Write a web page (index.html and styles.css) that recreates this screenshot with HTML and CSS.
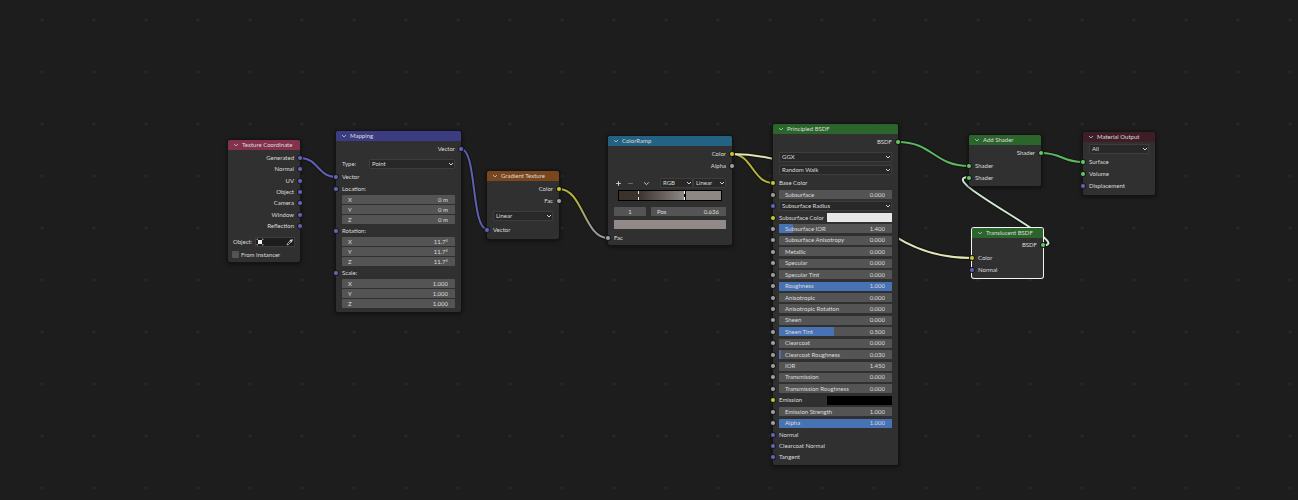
FILE: index.html
```html
<!DOCTYPE html>
<html lang="en">

<head>
    <meta charset="UTF-8">
    <meta name="viewport" content="width=device-width, initial-scale=1.0">
    <title>Shader Editor</title>
    <link rel="stylesheet" href="styles.css">
</head>

<body>
    <main class="canvas">
        <!-- Links between sockets -->
        <svg class="links" aria-hidden="true">
            <defs>
                <linearGradient id="color-to-fac" x1="0" y1="0" x2="1" y2="1">
                    <stop offset="0.3" stop-color="#b5b53a" />
                    <stop offset="0.7" stop-color="#9a9a9a" />
                </linearGradient>
            </defs>
            <g class="link-shadow">
                <path d="M300 158C318 158 318 177 336 177" />
                <path d="M461 149C477 149 471 229 487 229" />
                <path d="M559 189C583 189 584 238 608 238" />
                <path d="M732 154C752 154 753 183 773 183" />
                <path d="M732 154C850 154 862 258 971 258" />
                <path d="M898 142C933 142 934 166 969 166" />
                <path d="M1041 153C1062 153 1062 162 1083 162" />
                <path d="M1044 245C1075 245 932 177 969 177" />
            </g>
            <g class="link">
                <path class="vector" d="M300 158C318 158 318 177 336 177" />
                <path class="vector" d="M461 149C477 149 471 229 487 229" />
                <path stroke="url(#color-to-fac)" d="M559 189C583 189 584 238 608 238" />
                <path class="color" d="M732 154C752 154 753 183 773 183" />
                <path class="color-active" d="M732 154C850 154 862 258 971 258" />
                <path class="shader" d="M898 142C933 142 934 166 969 166" />
                <path class="shader" d="M1041 153C1062 153 1062 162 1083 162" />
                <path class="shader-active" d="M1044 245C1075 245 932 177 969 177" />
            </g>
        </svg>

        <section class="node tex-coord">
            <h2 class="red"><svg class="chevron" viewBox="0 0 6 4"><path d="M1 1l2 2 2-2" /></svg>Texture Coordinate</h2>
            <div class="rows outputs">
                <div class="row out vec">Generated</div>
                <div class="row out vec">Normal</div>
                <div class="row out vec">UV</div>
                <div class="row out vec">Object</div>
                <div class="row out vec">Camera</div>
                <div class="row out vec">Window</div>
                <div class="row out vec">Reflection</div>
            </div>
            <div class="object-row">
                <span>Object:</span>
                <button class="picker" aria-label="Pick object">
                    <svg class="cube" viewBox="0 0 8 8"><path d="M1 2V1h1M6 1h1v1M7 6v1H6M2 7H1V6" /><rect x="2" y="2" width="4" height="4" /></svg>
                    <svg class="dropper" viewBox="0 0 8 8"><path d="M1 7l.5-1.5L4.500 2.500l1 1L2.500 6.500z" /><path class="bulb" d="M4 2l2 2M5 3l1.500-1.500" /></svg>
                </button>
            </div>
            <label class="check"><input type="checkbox">From Instancer</label>
        </section>

        <section class="node mapping">
            <h2 class="blue"><svg class="chevron" viewBox="0 0 6 4"><path d="M1 1l2 2 2-2" /></svg>Mapping</h2>
            <div class="row out vec">Vector</div>
            <div class="type-row">
                <label for="map-type">Type:</label>
                <select id="map-type"><option>Point</option></select>
            </div>
            <div class="row in vec">Vector</div>
            <div class="row in vec">Location:</div>
            <div class="xyz">
                <label class="field">X<input type="text" value="0 m"></label>
                <label class="field">Y<input type="text" value="0 m"></label>
                <label class="field">Z<input type="text" value="0 m"></label>
            </div>
            <div class="row in vec">Rotation:</div>
            <div class="xyz">
                <label class="field">X<input type="text" value="11.7°"></label>
                <label class="field">Y<input type="text" value="11.7°"></label>
                <label class="field">Z<input type="text" value="11.7°"></label>
            </div>
            <div class="row in vec">Scale:</div>
            <div class="xyz">
                <label class="field">X<input type="text" value="1.000"></label>
                <label class="field">Y<input type="text" value="1.000"></label>
                <label class="field">Z<input type="text" value="1.000"></label>
            </div>
        </section>

        <section class="node gradient-tex">
            <h2 class="orange"><svg class="chevron" viewBox="0 0 6 4"><path d="M1 1l2 2 2-2" /></svg>Gradient Texture</h2>
            <div class="row out col">Color</div>
            <div class="row out val">Fac</div>
            <div class="select-row"><select aria-label="Gradient type"><option>Linear</option></select></div>
            <div class="row in vec">Vector</div>
        </section>

        <section class="node color-ramp">
            <h2 class="teal"><svg class="chevron" viewBox="0 0 6 4"><path d="M1 1l2 2 2-2" /></svg>ColorRamp</h2>
            <div class="row out col">Color</div>
            <div class="row out val">Alpha</div>
            <div class="ramp-tools">
                <button aria-label="Add stop"><svg viewBox="0 0 6 6"><path d="M3 1v4M1 3h4" /></svg></button>
                <button class="dim" aria-label="Remove stop"><svg viewBox="0 0 6 6"><path d="M1 3h4" /></svg></button>
                <button aria-label="Ramp tools"><svg viewBox="0 0 6 6"><path d="M1 2l2 2 2-2" /></svg></button>
                <select aria-label="Color mode"><option>RGB</option></select>
                <select aria-label="Interpolation"><option>Linear</option></select>
            </div>
            <div class="ramp">
                <i class="stop" style="left: 19%"></i>
                <i class="stop active" style="left: 64%"></i>
            </div>
            <div class="stop-row">
                <input class="index" type="text" value="1" aria-label="Active stop">
                <label class="field">Pos<input type="text" value="0.636"></label>
            </div>
            <input class="swatch" type="color" value="#928a88" aria-label="Stop color">
            <div class="row in val">Fac</div>
        </section>

        <section class="node principled">
            <h2 class="green"><svg class="chevron" viewBox="0 0 6 4"><path d="M1 1l2 2 2-2" /></svg>Principled BSDF</h2>
            <div class="row out shd">BSDF</div>
            <div class="select-row"><select aria-label="Distribution"><option>GGX</option></select></div>
            <div class="select-row"><select aria-label="Subsurface method"><option>Random Walk</option></select></div>
            <div class="row in col base">Base Color</div>
            <div class="rows params">
                <div class="row in val"><label class="field">Subsurface<input type="text" value="0.000"></label></div>
                <div class="row in vec"><select aria-label="Subsurface radius"><option>Subsurface Radius</option></select></div>
                <div class="row in col"><label class="color-field">Subsurface Color<input class="swatch" type="color" value="#e7e7e7"></label></div>
                <div class="row in val"><label class="field"><b class="fill" style="width: 12%"></b>Subsurface IOR<input type="text" value="1.400"></label></div>
                <div class="row in val"><label class="field">Subsurface Anisotropy<input type="text" value="0.000"></label></div>
                <div class="row in val"><label class="field">Metallic<input type="text" value="0.000"></label></div>
                <div class="row in val"><label class="field">Specular<input type="text" value="0.000"></label></div>
                <div class="row in val"><label class="field">Specular Tint<input type="text" value="0.000"></label></div>
                <div class="row in val"><label class="field"><b class="fill" style="width: 100%"></b>Roughness<input type="text" value="1.000"></label></div>
                <div class="row in val"><label class="field">Anisotropic<input type="text" value="0.000"></label></div>
                <div class="row in val"><label class="field">Anisotropic Rotation<input type="text" value="0.000"></label></div>
                <div class="row in val"><label class="field">Sheen<input type="text" value="0.000"></label></div>
                <div class="row in val"><label class="field"><b class="fill" style="width: 49%"></b>Sheen Tint<input type="text" value="0.500"></label></div>
                <div class="row in val"><label class="field">Clearcoat<input type="text" value="0.000"></label></div>
                <div class="row in val"><label class="field"><b class="fill" style="width: 2%"></b>Clearcoat Roughness<input type="text" value="0.030"></label></div>
                <div class="row in val"><label class="field">IOR<input type="text" value="1.450"></label></div>
                <div class="row in val"><label class="field">Transmission<input type="text" value="0.000"></label></div>
                <div class="row in val"><label class="field">Transmission Roughness<input type="text" value="0.000"></label></div>
                <div class="row in col"><label class="color-field">Emission<input class="swatch" type="color" value="#000000"></label></div>
                <div class="row in val"><label class="field">Emission Strength<input type="text" value="1.000"></label></div>
                <div class="row in val"><label class="field"><b class="fill" style="width: 100%"></b>Alpha<input type="text" value="1.000"></label></div>
                <div class="row in vec">Normal</div>
                <div class="row in vec">Clearcoat Normal</div>
                <div class="row in vec">Tangent</div>
            </div>
        </section>

        <section class="node add-shader">
            <h2 class="green"><svg class="chevron" viewBox="0 0 6 4"><path d="M1 1l2 2 2-2" /></svg>Add Shader</h2>
            <div class="row out shd">Shader</div>
            <div class="row in shd">Shader</div>
            <div class="row in shd">Shader</div>
        </section>

        <section class="node translucent selected">
            <h2 class="green"><svg class="chevron" viewBox="0 0 6 4"><path d="M1 1l2 2 2-2" /></svg>Translucent BSDF</h2>
            <div class="row out shd">BSDF</div>
            <div class="row in col">Color</div>
            <div class="row in vec">Normal</div>
        </section>

        <section class="node output">
            <h2 class="maroon"><svg class="chevron" viewBox="0 0 6 4"><path d="M1 1l2 2 2-2" /></svg>Material Output</h2>
            <div class="select-row"><select aria-label="Target"><option>All</option></select></div>
            <div class="row in shd">Surface</div>
            <div class="row in shd">Volume</div>
            <div class="row in vec">Displacement</div>
        </section>
    </main>
</body>

</html>
```
FILE: styles.css
```css
* {
    box-sizing: border-box;
}

body {
    margin: 0;
    background-color: #1d1d1d;
    color: #dcdcdc;
    font-family: Lato, sans-serif;
    font-size: 6px;
    line-height: 10px;
}

input,
select,
button {
    margin: 0;
    padding: 0;
    border: none;
    border-radius: 0;
    background: none;
    color: inherit;
    font: inherit;
    appearance: none;
}

.canvas {
    position: relative;
    min-height: 100vh;
    overflow: hidden;
    background-image: radial-gradient(circle, #282828 1px, transparent 2px);
    background-size: 52px 52px;
    background-position: 16px -6px;
}

.links {
    position: absolute;
    top: 0;
    left: 0;
    width: 100%;
    height: 100%;
    fill: none;
}

.link-shadow {
    stroke: #121212;
    stroke-width: 4;
}

.link {
    stroke-width: 2;
}

.link .vector {
    stroke: #6060b4;
}

.link .color {
    stroke: #b5b53a;
}

.link .color-active {
    stroke: #e6e6b8;
}

.link .shader {
    stroke: #5cb860;
}

.link .shader-active {
    stroke: #cfe6d0;
}

/* Nodes */
.node {
    position: absolute;
    background-color: #303030;
    border-radius: 2px;
    box-shadow: 0 0 0 1px #141414, 0 1px 4px 1px rgba(0, 0, 0, 0.5);
}

.node.selected {
    box-shadow: 0 0 0 1px #f2f2f2;
}

.node h2 {
    display: flex;
    align-items: center;
    gap: 3px;
    height: 10px;
    margin: 0;
    padding-left: 5px;
    border-radius: 2px 2px 0 0;
    font-size: 6px;
    font-weight: normal;
    white-space: nowrap;
}

.chevron {
    width: 6px;
    height: 4px;
    fill: none;
    stroke: #c8c8c8;
    stroke-width: 0.8;
}

.red {
    background-color: #83314c;
}

.blue {
    background-color: #3c3c83;
}

.orange {
    background-color: #79461d;
}

.teal {
    background-color: #246283;
}

.green {
    background-color: #2b652b;
}

.maroon {
    background-color: #3f1d27;
}

.tex-coord {
    left: 228px;
    top: 140px;
    width: 72px;
    padding-bottom: 1px;
}

.mapping {
    left: 336px;
    top: 131px;
    width: 125px;
    padding-bottom: 3px;
}

.gradient-tex {
    left: 487px;
    top: 171px;
    width: 72px;
    padding-bottom: 3px;
}

.color-ramp {
    left: 608px;
    top: 136px;
    width: 124px;
    padding-bottom: 1px;
}

.principled {
    left: 773px;
    top: 124px;
    width: 125px;
    padding-bottom: 2px;
}

.add-shader {
    left: 969px;
    top: 135px;
    width: 72px;
    padding-bottom: 2px;
}

.translucent {
    left: 972px;
    top: 228px;
    width: 71px;
    padding-bottom: 2px;
}

.output {
    left: 1083px;
    top: 132px;
    width: 72px;
    padding-bottom: 3px;
}

/* Socket rows */
.row {
    position: relative;
    display: flex;
    align-items: center;
    height: 12px;
    padding: 0 6px;
    white-space: nowrap;
}

.rows {
    display: flex;
    flex-direction: column;
}

.rows .row {
    flex: 1;
    height: auto;
}

.row.out {
    justify-content: flex-end;
}

.row::before {
    content: "";
    position: absolute;
    top: 50%;
    left: -2px;
    width: 4px;
    height: 4px;
    margin-top: -2px;
    border-radius: 50%;
    box-shadow: 0 0 0 1px #1a1a1a;
}

.row.out::before {
    left: auto;
    right: -2px;
}

.vec::before {
    background-color: #6363c0;
}

.col::before {
    background-color: #c7c729;
}

.val::before {
    background-color: #a1a1a1;
}

.shd::before {
    background-color: #63c763;
}

/* Controls */
select {
    width: 100%;
    height: 10px;
    padding: 0 6px 0 2px;
    border: 1px solid #3d3d3d;
    border-radius: 1px;
    background: #282828 url("data:image/svg+xml,%3Csvg xmlns='http://www.w3.org/2000/svg' viewBox='0 0 6 4'%3E%3Cpath d='M1 1l2 2 2-2' fill='none' stroke='%23d0d0d0'/%3E%3C/svg%3E") no-repeat right 0 center / 6px 4px;
    line-height: 8px;
}

.select-row {
    display: flex;
    align-items: center;
    height: 13px;
    padding: 0 6px;
}

.field {
    position: relative;
    display: flex;
    align-items: center;
    flex: 1;
    height: 9px;
    padding: 0 7px 0 6px;
    background-color: #545454;
    border-radius: 1px;
    isolation: isolate;
}

.field input {
    flex: 1;
    min-width: 0;
    width: 20px;
    height: 9px;
    text-align: right;
}

.fill {
    position: absolute;
    top: 0;
    left: 0;
    bottom: 0;
    z-index: -1;
    background-color: #4772b3;
    border-radius: 1px;
}

.color-field {
    display: flex;
    align-items: center;
    justify-content: space-between;
    flex: 1;
}

.swatch {
    display: block;
    width: 65px;
    height: 9px;
}

.swatch::-webkit-color-swatch-wrapper {
    padding: 0;
}

.swatch::-webkit-color-swatch {
    border: none;
}

/* Texture Coordinate */
.outputs {
    height: 80px;
    margin-top: 2px;
}

.object-row {
    display: flex;
    align-items: center;
    gap: 3px;
    height: 12px;
    margin-top: 4px;
    padding: 0 5px;
}

.picker {
    display: flex;
    align-items: center;
    justify-content: space-between;
    flex: 1;
    height: 10px;
    border: 1px solid #3d3d3d;
    background-color: #1d1d1d;
}

.picker svg {
    width: 8px;
    height: 8px;
    fill: none;
    stroke: #d6d6d6;
    stroke-width: 0.7;
}

.picker .cube rect {
    fill: #f0f0f0;
    stroke: none;
}

.picker .bulb {
    stroke-width: 1.4;
}

.check {
    display: flex;
    align-items: center;
    gap: 2px;
    height: 13px;
    padding-left: 4px;
}

.check input {
    width: 7px;
    height: 7px;
    border-radius: 1px;
    background-color: #545454;
}

/* Mapping */
.mapping .out {
    margin-top: 2px;
}

.type-row {
    display: flex;
    align-items: center;
    height: 16px;
    padding: 2px 6px 0;
}

.type-row label {
    flex: 0 0 27px;
}

.xyz {
    display: flex;
    flex-direction: column;
    gap: 1px;
    padding: 0 6px;
    margin-bottom: 1px;
}

.xyz .field {
    flex: none;
}

/* Gradient Texture */
.gradient-tex .out:nth-child(2) {
    margin-top: 2px;
}

.gradient-tex .select-row {
    height: 17px;
}

/* ColorRamp */
.color-ramp .out:nth-child(2) {
    margin-top: 2px;
}

.ramp-tools {
    display: flex;
    align-items: center;
    height: 10px;
    margin-top: 6px;
    padding: 0 6px;
}

.ramp-tools button {
    flex: 0 0 9px;
    height: 9px;
    margin-right: 3px;
}

.ramp-tools button:nth-child(3) {
    margin: 0 9px 0 4px;
}

.ramp-tools .dim {
    opacity: 0.4;
}

.ramp-tools button svg {
    display: block;
    width: 7px;
    height: 7px;
    margin: 1px;
    fill: none;
    stroke: #d6d6d6;
    stroke-width: 0.8;
}

.ramp-tools select {
    flex: 1;
}

.ramp {
    position: relative;
    height: 11px;
    margin: 2px 10px 0;
    border: 1px solid #000;
    background: linear-gradient(to right, #3a322d 19%, #8e8885 64%);
}

.stop {
    position: absolute;
    top: 0;
    bottom: 0;
    border-left: 1px dashed #e0e0e0;
}

.stop.active {
    width: 2px;
    border-left-color: #fff;
    background-color: #000;
}

.stop-row {
    display: flex;
    gap: 5px;
    margin: 6px 6px 4px;
}

.index {
    width: 32px;
    height: 9px;
    border-radius: 1px;
    background-color: #545454;
    text-align: center;
}

.color-ramp .swatch {
    width: auto;
    min-width: calc(100% - 12px);
    margin: 0 6px 3px;
}

/* Principled BSDF */
.principled .out {
    margin-top: 2px;
    margin-bottom: 2px;
}

.principled .base {
    height: 13px;
}

.params {
    height: 274px;
}

/* Shaders and output */
.add-shader .out {
    margin-top: 2px;
    margin-bottom: 1px;
}

.translucent .out {
    margin-top: 1px;
    margin-bottom: 1px;
}

.output .select-row {
    height: 14px;
}
```
